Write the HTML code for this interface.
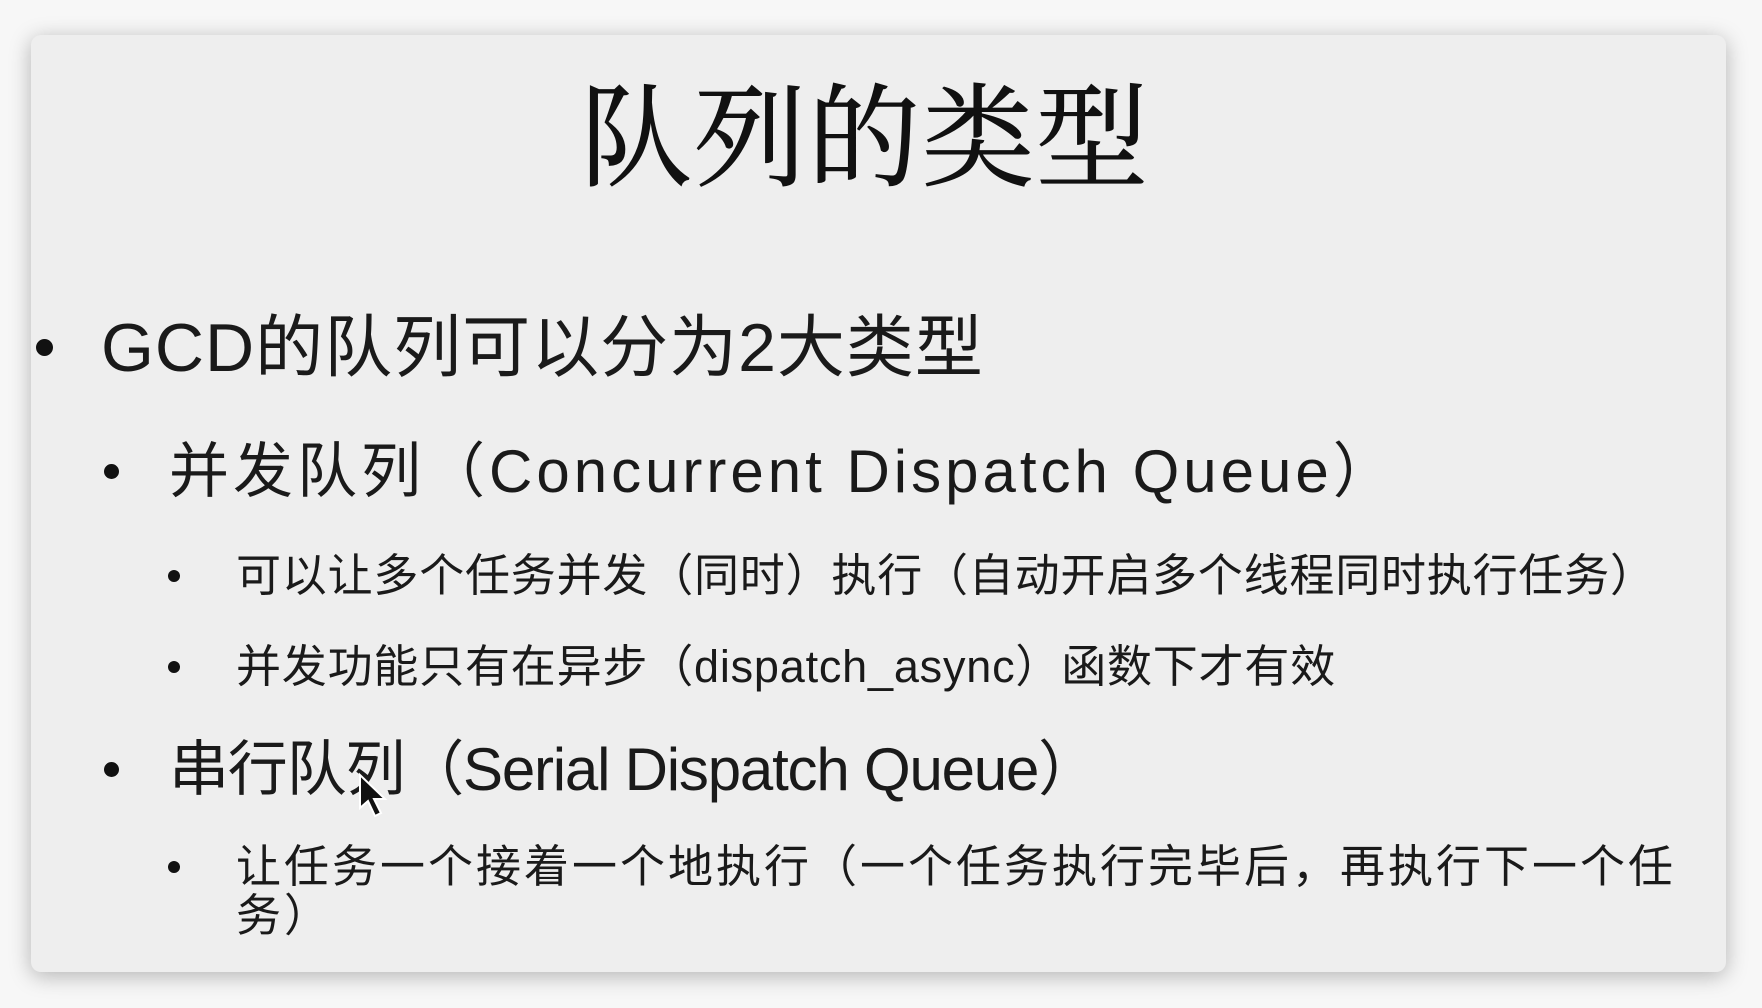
<!DOCTYPE html>
<html><head><meta charset="utf-8"><style>
html,body{margin:0;padding:0;}
body{width:1762px;height:1008px;background:#f7f7f7;position:relative;overflow:hidden;font-family:"Liberation Sans","Noto Sans CJK SC",sans-serif;color:#1a1a1a;}
.card{position:absolute;left:31px;top:35px;width:1695px;height:937px;background:#eeeeee;border-radius:10px;box-shadow:0 4px 22px rgba(0,0,0,0.28);}
.t{position:absolute;white-space:nowrap;line-height:1;}
.b{position:absolute;border-radius:50%;background:#111;}
</style></head><body>
<div class="card"></div>
<div class="t" style="left:580px;top:84px;font-size:112px;font-family:'Liberation Serif','Noto Serif CJK SC',serif;color:#111;letter-spacing:2px;-webkit-text-stroke:1px #111;">队列的类型</div>

<div class="b" style="left:36px;top:339px;width:17px;height:17px;"></div>
<div class="t" style="left:101px;top:314px;font-size:68px;letter-spacing:1px;">GCD的队列可以分为2大类型</div>

<div class="b" style="left:104px;top:464px;width:15px;height:15px;"></div>
<div class="t" style="left:169px;top:442px;font-size:60px;letter-spacing:4px;">并发队列（Concurrent Dispatch Queue）</div>

<div class="b" style="left:168px;top:570px;width:12px;height:12px;"></div>
<div class="t" style="left:236px;top:553px;font-size:45px;letter-spacing:0.8px;">可以让多个任务并发（同时）执行（自动开启多个线程同时执行任务）</div>

<div class="b" style="left:168px;top:661px;width:12px;height:12px;"></div>
<div class="t" style="left:236px;top:644px;font-size:45px;letter-spacing:0.8px;">并发功能只有在异步（dispatch_async）函数下才有效</div>

<div class="b" style="left:104px;top:762px;width:15px;height:15px;"></div>
<div class="t" style="left:169px;top:740px;font-size:60px;letter-spacing:-1.2px;">串行队列（Serial Dispatch Queue）</div>

<div class="b" style="left:168px;top:861px;width:12px;height:12px;"></div>
<div class="t" style="left:236px;top:844px;font-size:45px;letter-spacing:3px;">让任务一个接着一个地执行（一个任务执行完毕后，再执行下一个任</div>
<div class="t" style="left:236px;top:893px;font-size:45px;letter-spacing:3px;">务）</div>

<svg style="position:absolute;left:356px;top:772px" width="40" height="56" viewBox="0 0 40 56">
<path d="M4 3 L4 36 L12 29 L19 44 L25 41 L18 27 L29 27 Z" fill="#111" stroke="#fff" stroke-width="2"/>
</svg>
</body></html>
